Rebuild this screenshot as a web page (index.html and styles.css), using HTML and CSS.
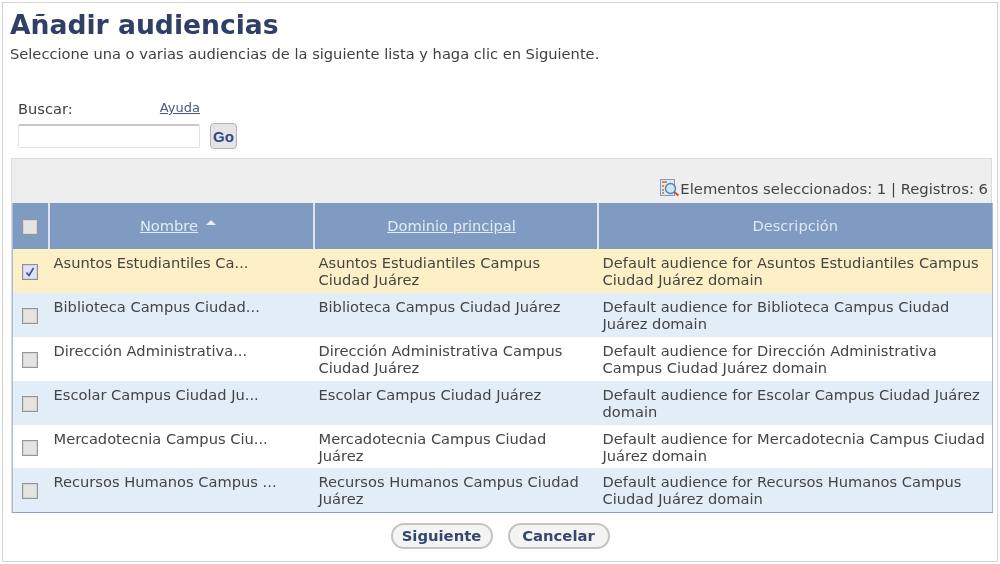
FILE: index.html
```html
<!DOCTYPE html>
<html lang="es">
<head>
<meta charset="utf-8">
<title>Añadir audiencias</title>
<link rel="stylesheet" href="styles.css">
</head>
<body>
<main class="frame">
  <h1 class="title">Añadir audiencias</h1>
  <p class="intro">Seleccione una o varias audiencias de la siguiente lista y haga clic en Siguiente.</p>
  <section class="search">
    <div class="search-labels"><span>Buscar:</span><a href="#" class="help">Ayuda</a></div>
    <div class="search-row">
      <input class="search-input" type="text" aria-label="Buscar">
      <button class="go" type="button">Go</button>
    </div>
  </section>
  <section class="panel">
    <div class="status">
      <svg class="status-icon" width="20" height="20" viewBox="0 0 20 20">
        <rect x="0.5" y="1.5" width="14" height="16" fill="#dfe8f5" stroke="#7f9cc6"/>
        <path d="M2 4h5M2 8h2M2 12h2M2 15h2" stroke="#d98f3a" stroke-width="2"/>
        <circle cx="10.5" cy="10.5" r="5" fill="#cfe6f7" stroke="#5a7fa8" stroke-width="1.4"/>
        <path d="M14 14l4.5 3.5" stroke="#b5562e" stroke-width="2"/>
      </svg>
      <span>Elementos seleccionados: 1 | Registros: 6</span>
    </div>
    <table class="grid">
      <colgroup><col class="c-check"><col class="c-name"><col class="c-domain"><col class="c-desc"></colgroup>
      <thead>
        <tr>
          <th class="head-check"><span class="box"></span></th>
          <th><a href="#">Nombre</a><span class="sort"></span></th>
          <th><a href="#">Dominio principal</a></th>
          <th>Descripción</th>
        </tr>
      </thead>
      <tbody>
        <tr class="selected">
          <td class="check"><span class="box checked"><svg width="10" height="10" viewBox="0 0 10 10"><path d="M1.5 5.5l2.5 3 4.5-7.5" fill="none" stroke="#3a4fa8" stroke-width="1.6"/></svg></span></td>
          <td>Asuntos Estudiantiles Ca...</td>
          <td>Asuntos Estudiantiles Campus Ciudad Juárez</td>
          <td>Default audience for Asuntos Estudiantiles Campus Ciudad Juárez domain</td>
        </tr>
        <tr class="alt">
          <td class="check"><span class="box"></span></td>
          <td>Biblioteca Campus Ciudad...</td>
          <td>Biblioteca Campus Ciudad Juárez</td>
          <td>Default audience for Biblioteca Campus Ciudad Juárez domain</td>
        </tr>
        <tr>
          <td class="check"><span class="box"></span></td>
          <td>Dirección Administrativa...</td>
          <td>Dirección Administrativa Campus Ciudad Juárez</td>
          <td>Default audience for Dirección Administrativa Campus Ciudad Juárez domain</td>
        </tr>
        <tr class="alt">
          <td class="check"><span class="box"></span></td>
          <td>Escolar Campus Ciudad Ju...</td>
          <td>Escolar Campus Ciudad Juárez</td>
          <td>Default audience for Escolar Campus Ciudad Juárez domain</td>
        </tr>
        <tr>
          <td class="check"><span class="box"></span></td>
          <td>Mercadotecnia Campus Ciu...</td>
          <td>Mercadotecnia Campus Ciudad Juárez</td>
          <td>Default audience for Mercadotecnia Campus Ciudad Juárez domain</td>
        </tr>
        <tr class="alt">
          <td class="check"><span class="box"></span></td>
          <td>Recursos Humanos Campus ...</td>
          <td>Recursos Humanos Campus Ciudad Juárez</td>
          <td>Default audience for Recursos Humanos Campus Ciudad Juárez domain</td>
        </tr>
      </tbody>
    </table>
  </section>
  <div class="actions">
    <button class="pill" type="button">Siguiente</button>
    <button class="pill" type="button">Cancelar</button>
  </div>
</main>
</body>
</html>
```
FILE: styles.css
```css
* { box-sizing: border-box; }
html, body { margin: 0; padding: 0; background: #fff; }
body {
  width: 1000px;
  height: 564px;
  overflow: hidden;
  padding: 2px;
  font-family: "DejaVu Sans", Verdana, sans-serif;
  font-size: 14.65px;
  color: #3f3f3f;
}
.frame {
  height: 560px;
  border: 1px solid #d4d4d4;
  padding: 6px 5px 0 7px;
  filter: blur(0.5px);
}
.title {
  margin: 0;
  font-size: 26.6px;
  line-height: 32px;
  font-weight: 700;
  color: #2f3f66;
}
.intro {
  margin: 4px 0 0;
  line-height: 18px;
  font-size: 14.65px;
}
.search { margin: 38px 0 0 8px; }
.search-labels {
  display: flex;
  justify-content: space-between;
  width: 182px;
  line-height: 16px;
}
.help { font-size: 13px; color: #44598c; line-height: 14px; }
.search-row { display: flex; align-items: center; gap: 10px; margin-top: 6px; }
.search-input {
  width: 182px;
  height: 24px;
  border: 1px solid #dde3ec;
  border-top: 2px solid #c8c8c8;
  background: #fff;
  border-radius: 2px;
}
.go {
  width: 27px;
  height: 26px;
  padding: 0;
  border: 1px solid #b5b5b5;
  border-radius: 4px;
  background: #e4e4e4;
  color: #33478a;
  font: 700 15px/1 "Liberation Sans", Arial, sans-serif;
}
.panel {
  margin-top: 9px;
  margin-left: 1px;
  width: 981px;
  background: #eeeeee;
  border: 1px solid #dcdcdc;
  border-bottom: 0;
}
.status {
  height: 44px;
  display: flex;
  justify-content: flex-end;
  align-items: flex-end;
  padding: 0 3px 6px 0;
  line-height: 17px;
  font-size: 14.8px;
  color: #444;
}
.status-icon { margin-bottom: -1px; }
.grid {
  width: 980px;
  table-layout: fixed;
  border-collapse: collapse;
  background: #fff;
  border-bottom: 1px solid #8aa4c8;
  border-left: 1px solid #a8bcd8;
  border-right: 1px solid #a8bcd8;
}
.c-check { width: 36px; }
.c-name { width: 265px; }
.c-domain { width: 284px; }
.c-desc { width: 395px; }
.grid th {
  height: 46.4px;
  background: #7f9bc1;
  color: #dfe8f3;
  font-weight: 400;
  text-align: center;
  border-left: 2px solid #dbe4ef;
  padding: 0 0 2px;
}
.grid th.head-check { border-left: 0; padding: 0; }
.grid th a { color: #e2ebf6; }
.grid th:nth-child(2) { padding-right: 6px; }
.grid th:nth-child(3) { padding-right: 8px; }
.sort {
  display: inline-block;
  width: 0;
  height: 0;
  margin: 0 0 6px 8px;
  border-left: 5px solid transparent;
  border-right: 5px solid transparent;
  border-bottom: 5px solid #e8eef6;
}
.grid td {
  height: 43.8px;
  padding: 5px 5px 0 5px;
  vertical-align: top;
  line-height: 17px;
  color: #444;
}
.grid td.check { padding: 13px 0 0 9px; }
.selected td { background: #fdf0c6; }
.alt td { background: #e3edf8; }
.box {
  display: inline-flex;
  align-items: center;
  justify-content: center;
  width: 16px;
  height: 16px;
  border: 1px solid #969696;
  background: #e4e4e4;
  box-shadow: inset 0 0 0 1px #d4d4d4;
  vertical-align: middle;
}
.box.checked { background: #dfe3f3; border-color: #8a8ea8; }
.actions {
  display: flex;
  justify-content: center;
  gap: 15px;
  margin-top: 10px;
  padding-right: 2px;
}
.pill {
  width: 102px;
  height: 26px;
  padding: 1px 0 0;
  border: 2px solid #c4c4c4;
  border-radius: 13px;
  background: #f4f4f4;
  color: #33476f;
  font: 700 14.8px/1 "DejaVu Sans", Verdana, sans-serif;
}
```
